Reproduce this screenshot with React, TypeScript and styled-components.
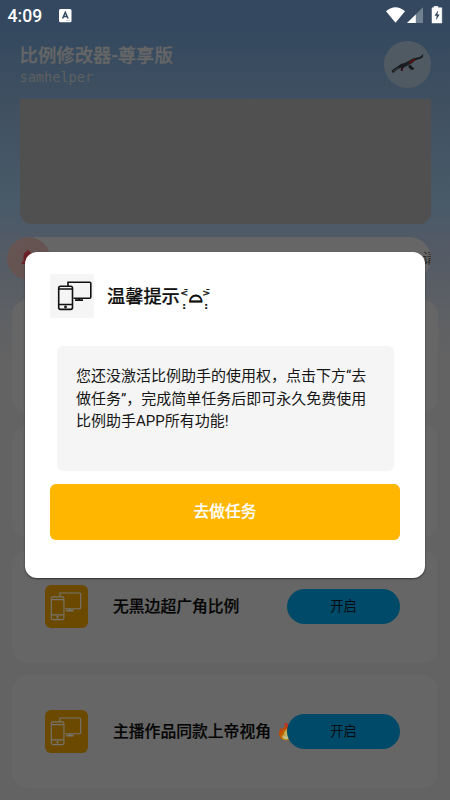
import React from "react";
import styled, { createGlobalStyle } from "styled-components";

const Global = createGlobalStyle`
  * { box-sizing: border-box; }
  body { margin: 0; font-family: Roboto, "Noto Sans CJK SC", sans-serif; }
`;

const Screen = styled.main`
  position: relative;
  width: 450px;
  height: 800px;
  overflow: hidden;
  background: linear-gradient(#34495f 0, #34495f 30px, #405061 105px, #495a68 205px, #525a66 242px, #5d6064 310px, #636363 360px);
`;
const Page = styled.div`
  display: flex;
  flex-direction: column;
  height: 800px;
`;
const StatusBar = styled.header`
  height: 32px;
  flex: none;
  display: flex;
  align-items: center;
  padding: 0 7px 0 7.5px;
  color: #fff;
`;
const Clock = styled.span`
  font-size: 17.6px;
  font-weight: 500;
  width: 51.5px;
  line-height: 20px;
`;
const StatusIcons = styled.svg`
  margin-left: auto;
`;
const TopRow = styled.div`
  height: 67px;
  flex: none;
  display: flex;
  justify-content: space-between;
  padding: 9px 19.5px 0 19.5px;
  color: #666;
`;
const AppName = styled.h1`
  margin: 0;
  padding-top: 1px;
  font-size: 18.4px;
  line-height: 27px;
  font-weight: 500;
  white-space: nowrap;
  -webkit-text-stroke: 0.3px #666;
`;
const AppId = styled.p`
  margin: -1px 0 0;
  font: 13.6px/18px "DejaVu Sans Mono", monospace;
  color: #5f6061;
`;
const Avatar = styled.div`
  width: 46.5px;
  height: 46.5px;
  border-radius: 50%;
  background: #505a63;
`;
const Banner = styled.div`
  height: 125px;
  flex: none;
  margin: 0 19.5px;
  border-radius: 0 0 12px 12px;
  background: #505050;
`;
const Notice = styled.div`
  height: 43px;
  flex: none;
  margin: 13px 19px 0 6.5px;
  display: flex;
  overflow: hidden;
  border-radius: 22px;
  background: #666;
`;
const Bell = styled.div`
  width: 43px;
  height: 43px;
  flex: none;
  display: grid;
  place-items: center;
  border-radius: 50%;
  background: #665452;
`;
const Ticker = styled.span`
  margin-left: auto;
  width: 8.5px;
  overflow: hidden;
  font-size: 14px;
  line-height: 43px;
  color: #262626;
`;
const Cards = styled.section`
  display: flex;
  flex-direction: column;
  gap: 12px;
  padding: 20px 12px 0;
`;
const Card = styled.article`
  height: 113px;
  flex: none;
  display: flex;
  align-items: center;
  padding: 0 38px 0 33px;
  border-radius: 15px;
  background: #666;
`;
const Tile = styled.div`
  width: 43px;
  height: 43px;
  flex: none;
  border-radius: 6px;
  background: #6b4a00;
`;
const CardTitle = styled.h2`
  margin: 0 0 0 25px;
  width: 174px;
  flex: none;
  font-size: 15.8px;
  line-height: 24px;
  font-weight: 500;
  white-space: nowrap;
  color: #050505;
  -webkit-text-stroke: 0.2px #050505;
`;
const Fire = styled.span`
  filter: brightness(0.75);
  margin-left: 5px;
`;
const Toggle = styled.button`
  position: relative;
  width: 113px;
  height: 34.5px;
  flex: none;
  border: 0;
  border-radius: 18px;
  padding: 0;
  background: #004a69;
  color: #060c10;
  font: 13.2px/34px Roboto, "Noto Sans CJK SC", sans-serif;
`;
const Overlay = styled.div`
  position: absolute;
  inset: 0;
  padding: 251.5px 25px 0;
`;
const Dialog = styled.section`
  height: 326px;
  padding: 22px 25px 0;
  border-radius: 12px;
  background: #fff;
  box-shadow: 0 1px 2px rgba(0, 0, 0, 0.5);
`;
const DialogHead = styled.div`
  display: flex;
  align-items: center;
  height: 44px;
`;
const DialogIcon = styled.div`
  width: 44px;
  height: 44px;
  background: #f5f5f5;
`;
const DialogTitle = styled.h2`
  display: flex;
  margin: 1px 0 0 13px;
  font-size: 18.2px;
  line-height: 27px;
  font-weight: 500;
  color: #111;
  white-space: nowrap;
  -webkit-text-stroke: 0.2px #111;
`;
const Kaomoji = styled.span`
  display: flex;
  font: bold 17px/27px "DejaVu Sans", "Noto Sans", sans-serif;
`;
const Eye = styled.span`
  display: flex;
  flex-direction: column;
  align-items: center;
  width: 9px;
  height: 27px;
  font-size: 9.5px;
  line-height: 13px;
  padding-top: 3px;
`;
const Message = styled.p`
  height: 124.5px;
  margin: 28.5px 6.5px 0 7px;
  padding: 19px 19px;
  border-radius: 6px;
  background: #f5f5f5;
  color: #161616;
  font-size: 15px;
  line-height: 22.5px;
  white-space: nowrap;
`;
const Action = styled.button`
  display: block;
  width: 350px;
  height: 56.5px;
  margin-top: 13px;
  padding: 0;
  border: 0;
  border-radius: 6px;
  background: #ffb600;
  color: #fff;
  font: 500 15.8px/56px Roboto, "Noto Sans CJK SC", sans-serif;
  -webkit-text-stroke: 0.2px #fff;
`;

type DevicesProps = { color: string; size: number; viewBox?: string; weight?: number };

function Devices({ color, size, viewBox = "0 0 44 44", weight = 1.4 }: DevicesProps) {
  return (
    <svg width={size} height={size} viewBox={viewBox} preserveAspectRatio="none" display="block" fill="none" stroke={color} strokeWidth={weight}>
      <path d="M18 12V8.2H39.8Q40.8 8.2 40.8 9.2V23Q40.8 24.3 39.6 24.3H23.5" />
      <path d="M29 24.5v1.5M25 26.2h8" strokeWidth="1.8" />
      <rect x="8.7" y="12.2" width="13.8" height="23.2" rx="1.8" />
      <path d="M9 15h13M9 30.5h13" />
      <circle cx="15.5" cy="33" r=".6" />
    </svg>
  );
}

function Rifle() {
  return (
    <svg width="46.5" height="46.5" viewBox="0 0 46.5 46.5" display="block">
      <path d="M7.5 29.5L17 23l4-1.2 8-4.3 5.5-1.3 2.5-1 1.3-1.8 1 .2-.5 3-4 1.6-3.8 1.2-3 2.8-4.5 2.4-4 2.2-3.5.2-3.5 2L9 32.3z" fill="#1b1e20" />
      <path d="M24 25l2.4-1.2 2.1 2.4 1.7.7-.8 1.8-3-.2zM17 26.5l2.5-.8-1 4.2h-1.7z" fill="#17191a" />
      <path d="M24.5 21.2l6-3.6 1.2 1.4-6 3.8zM18 27.3l1.6-.7-1 3-1.3.1z" fill="#541417" />
      <path d="M9.3 30l5-3.1" stroke="#3b3c3c" strokeWidth="1" />
    </svg>
  );
}

const features = [
  { title: "", hot: false },
  { title: "", hot: false },
  { title: "无黑边超广角比例", hot: false },
  { title: "主播作品同款上帝视角", hot: true },
];

export default function App() {
  return (
    <Screen>
      <Global />
      <Page>
        <StatusBar>
          <Clock>4:09</Clock>
          <svg width="13" height="14" viewBox="0 0 13 14">
            <rect width="12.5" height="13.3" rx="1.5" fill="#fff" />
            <path d="M3.6 9.5L6.3 3.3 9 9.5M4.7 7.6h3.3" fill="none" stroke="#34495f" strokeWidth="1.5" />
            <path d="M7 11.6h4" stroke="#a9b2bc" strokeWidth=".7" />
          </svg>
          <StatusIcons width="57" height="20" viewBox="0 0 57 20">
            <path d="M0 5.3Q9.5-2.8 19 5.3L9.5 16.7z" fill="#fff" />
            <path d="M37 1.3V17H21z" fill="#718090" />
            <path d="M29.8 8.4V17H21z" fill="#fff" />
            <path d="M48 .2h4v1.6h3.8V17H46V1.8h2z" fill="#fff" stroke="#fff" strokeWidth=".5" strokeLinejoin="round" />
            <path d="M52.2 4.3l-3.7 5.4h2.2l-.7 4.6 3.7-5.8h-2.2z" fill="#34495f" />
          </StatusIcons>
        </StatusBar>
        <TopRow>
          <div>
            <AppName>比例修改器-尊享版</AppName>
            <AppId>samhelper</AppId>
          </div>
          <Avatar><Rifle /></Avatar>
        </TopRow>
        <Banner />
        <Notice>
          <Bell>
            <svg width="14" height="17" viewBox="0 0 14 17">
              <path d="M7 0q1.4 0 1.4 1.8 3.1 1 3.1 4.6v4.4L14 14H0l2.5-3.2V6.4q0-3.6 3.1-4.6Q5.6 0 7 0zM5 15h4q-2 3-4 0z" fill="#6d2025" />
            </svg>
          </Bell>
          <Ticker>请</Ticker>
        </Notice>
        <Cards>
          {features.map((f, i) => (
            <Card key={i}>
              {f.title && (
                <>
                  <Tile><Devices size={43} color="#77746e" viewBox="1.8 0 47 44" weight={1.2} /></Tile>
                  <CardTitle>{f.title}{f.hot && <Fire>🔥</Fire>}</CardTitle>
                  <Toggle>开启</Toggle>
                </>
              )}
            </Card>
          ))}
        </Cards>
      </Page>
      <Overlay>
        <Dialog role="dialog">
          <DialogHead>
            <DialogIcon><Devices size={44} color="#111" weight={1.6} /></DialogIcon>
            <DialogTitle>
              温馨提示
              <Kaomoji>
                <Eye><span>{"<\u0304"}</span><span>:</span></Eye>
                ⌓
                <Eye><span>{">\u0304"}</span><span>:</span></Eye>
              </Kaomoji>
            </DialogTitle>
          </DialogHead>
          <Message>
            您还没激活比例助手的使用权，点击下方“去<br />
            做任务”，完成简单任务后即可永久免费使用<br />
            比例助手APP所有功能!
          </Message>
          <Action>去做任务</Action>
        </Dialog>
      </Overlay>
    </Screen>
  );
}
